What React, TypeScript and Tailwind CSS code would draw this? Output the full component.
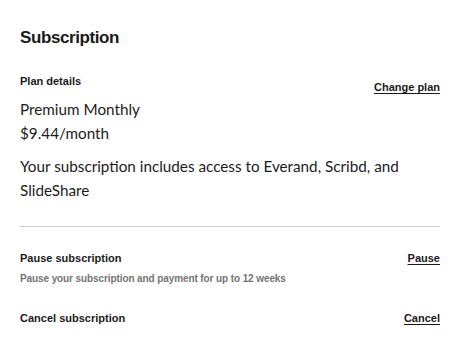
export default function App() {
  return (
    <div className="w-[460px] h-[345px] bg-white px-5 pt-[26px] font-['Liberation_Sans',Arial,sans-serif] text-[#1a1a1a]">
      <h1 className="text-[17px] leading-[24px] font-bold tracking-[-0.4px]">Subscription</h1>

      <div className="mt-[23px] flex justify-between">
        <div>
          <div className="text-[11px] leading-[16px] font-bold">Plan details</div>
          <div className="mt-[8px] font-['Lato',sans-serif] text-[15.25px] leading-[24px] text-[#1c1c1c]">
            <div>Premium Monthly</div>
            <div>$9.44/month</div>
          </div>
        </div>
        <a className="mt-[6px] text-[11px] leading-[16px] font-bold underline underline-offset-2">Change plan</a>
      </div>

      <p className="mt-[9px] font-['Lato',sans-serif] text-[15.25px] leading-[24px] text-[#1c1c1c]">
        Your subscription includes access to Everand, Scribd, and SlideShare
      </p>

      <div className="mt-[24px] border-t border-[#cccccc]" />

      <div className="mt-[23px] flex justify-between items-start">
        <div>
          <div className="text-[11px] leading-[16px] font-bold">Pause subscription</div>
          <div className="mt-[6px] text-[10px] leading-[14px] font-bold tracking-[-0.1px] text-[#757575]">
            Pause your subscription and payment for up to 12 weeks
          </div>
        </div>
        <a className="text-[11px] leading-[16px] font-bold underline underline-offset-2">Pause</a>
      </div>

      <div className="mt-[24px] flex justify-between items-start">
        <div className="text-[11px] leading-[16px] font-bold">Cancel subscription</div>
        <a className="text-[11px] leading-[16px] font-bold underline underline-offset-2">Cancel</a>
      </div>
    </div>
  );
}
